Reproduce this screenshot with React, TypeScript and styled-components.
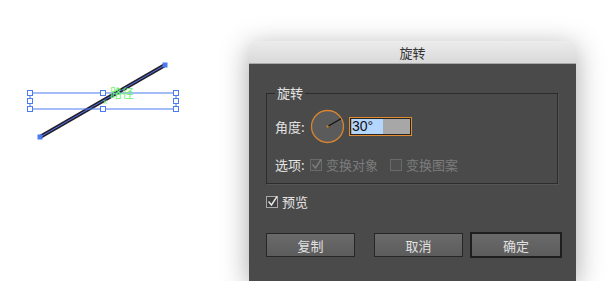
import styled, { createGlobalStyle } from "styled-components"

const GlobalStyle = createGlobalStyle`
    html, body {
        margin: 0;
        padding: 0;
        background: #ffffff;
    }
`

const cjk = `"Noto Sans CJK SC", "Noto Sans", sans-serif`

const Page = styled.div`
    display: flex;
    width: 609px;
    height: 281px;
    overflow: hidden;
    background: #ffffff;
`

const Canvas = styled.div`
    width: 249px;
    flex-shrink: 0;
`

const Dialog = styled.div`
    width: 327px;
    margin-top: 41px;
    display: flex;
    flex-direction: column;
    border-radius: 5px 5px 0 0;
    box-shadow: 0 6px 28px rgba(0, 0, 0, 0.35);
    font-family: ${cjk};
`

const TitleBar = styled.div`
    height: 22px;
    display: flex;
    align-items: center;
    justify-content: center;
    background: linear-gradient(#ececec, #d9d9d9);
    border-radius: 5px 5px 0 0;
    border-bottom: 1px solid #a9a9a9;
    font-size: 13px;
    color: #333;
`

const Body = styled.div`
    flex: 1;
    background: #4a4a4a;
    padding: 22px 17px 0 17px;
    display: flex;
    flex-direction: column;
`

const Group = styled.fieldset`
    margin: 0 1px 0 0;
    padding: 9px 8px 0 8px;
    height: 98px;
    box-sizing: border-box;
    border: 1px solid #2c2c2c;
    box-shadow: 1px 1px 0 #555;
    display: flex;
    flex-direction: column;
    gap: 11px;
`

const Legend = styled.legend`
    padding: 0 2px;
    margin-left: 0;
    font-size: 13px;
    line-height: 14px;
    color: #e4e4e4;
`

const Row = styled.div`
    display: flex;
    align-items: center;
`

const Label = styled.span`
    width: 35px;
    font-size: 13px;
    color: #e4e4e4;
`

const Dial = styled.svg`
    width: 35px;
    height: 35px;
    display: block;
`

const AngleInput = styled.div`
    margin-left: 4px;
    width: 63px;
    height: 19px;
    box-sizing: border-box;
    border: 1px solid #e38b2f;
    display: flex;
`

const AngleInner = styled.div`
    flex: 1;
    border: 1px solid #262626;
    background: #a7a7a7;
    display: flex;
    align-items: center;
    padding-left: 1px;
`

const Selected = styled.span`
    background: #b4d6fd;
    color: #111;
    font-family: "Liberation Sans", Arial, sans-serif;
    font-size: 14px;
    line-height: 15px;
    padding-right: 10px;
`

const Box = styled.span<{ $disabled?: boolean }>`
    width: 12px;
    height: 12px;
    box-sizing: border-box;
    border: 1px solid ${p => (p.$disabled ? "#6a6a6a" : "#a9a9a9")};
    background: ${p => (p.$disabled ? "#4f4f4f" : "#3f3f3f")};
    display: flex;
    align-items: center;
    justify-content: center;
    flex-shrink: 0;
`

const Check = styled.svg<{ $disabled?: boolean }>`
    width: 11px;
    height: 11px;
    overflow: visible;
    path {
        stroke: ${p => (p.$disabled ? "#7d7d7d" : "#e6e6e6")};
    }
`

const OptionText = styled.span<{ $disabled?: boolean }>`
    margin-left: 4px;
    font-size: 13px;
    color: ${p => (p.$disabled ? "#7c7c7c" : "#e4e4e4")};
`

const Option = styled.label<{ $gap?: number }>`
    display: flex;
    align-items: center;
    margin-left: ${p => p.$gap ?? 0}px;
`

const PreviewRow = styled.div`
    margin-top: 8px;
    display: flex;
    align-items: center;
`

const Buttons = styled.div`
    margin-top: 21px;
    display: flex;
    align-items: center;
`

const Button = styled.div<{ $primary?: boolean; $gap?: number }>`
    width: ${p => (p.$primary ? 92 : 89)}px;
    height: ${p => (p.$primary ? 26 : 24)}px;
    margin-left: ${p => p.$gap ?? 0}px;
    box-sizing: border-box;
    border: ${p => (p.$primary ? "2px solid #1f1f1f" : "1px solid #262626")};
    background: linear-gradient(#6a6a6a, #5c5c5c);
    display: flex;
    align-items: center;
    justify-content: center;
    font-size: 13px;
    color: #e0e0e0;
    flex-shrink: 0;
`

function CheckMark({ disabled }: { disabled?: boolean }) {
    return (
        <Check $disabled={disabled} viewBox="0 0 11 11">
            <path d="M1.5 5.5 L4.5 9 L10 0.5" fill="none" strokeWidth="1.4" />
        </Check>
    )
}

const handles: [number, number][] = [
    [30, 93], [103, 93], [176, 93],
    [30, 101], [176, 101],
    [30, 109], [103, 109], [176, 109],
]

function Drawing() {
    return (
        <svg width="249" height="281" viewBox="0 0 249 281">
            <line x1="40" y1="137" x2="165" y2="65" stroke="#261d26" strokeWidth="4" />
            <line x1="40" y1="137" x2="165" y2="65" stroke="#4a7bf0" strokeWidth="1" />
            <rect x="30" y="93" width="146" height="16" fill="none" stroke="#4a7bf0" strokeWidth="1" />
            {handles.map(([x, y]) => (
                <rect key={`${x}-${y}`} x={x - 2.5} y={y - 2.5} width="5" height="5" fill="#fff" stroke="#4a7bf0" strokeWidth="1" />
            ))}
            <rect x="37.5" y="134.5" width="5" height="5" fill="#4a7bf0" />
            <rect x="162.5" y="62.5" width="5" height="5" fill="#4a7bf0" />
            <text x="110" y="98" fontSize="12" fill="#6ef06e" fontFamily={cjk}>路径</text>
            <text x="103" y="104" fontSize="8" fill="#6ef06e" fontFamily="Liberation Sans, sans-serif">x</text>
        </svg>
    )
}

export default function App() {
    return (
        <>
            <GlobalStyle />
            <Page>
                <Canvas>
                    <Drawing />
                </Canvas>
                <Dialog>
                    <TitleBar>旋转</TitleBar>
                    <Body>
                        <Group>
                            <Legend>旋转</Legend>
                            <Row>
                                <Label>角度:</Label>
                                <Dial viewBox="0 0 35 35">
                                    <circle cx="17.5" cy="17.5" r="16" fill="#5b5b5b" stroke="#d9852f" strokeWidth="1.3" />
                                    <line x1="17.5" y1="17.5" x2="31" y2="9.7" stroke="#111" strokeWidth="1.2" />
                                    <circle cx="17.5" cy="17.5" r="1.2" fill="#c77a2c" />
                                </Dial>
                                <AngleInput>
                                    <AngleInner>
                                        <Selected>30°</Selected>
                                    </AngleInner>
                                </AngleInput>
                            </Row>
                            <Row>
                                <Label>选项:</Label>
                                <Option>
                                    <Box $disabled><CheckMark disabled /></Box>
                                    <OptionText $disabled>变换对象</OptionText>
                                </Option>
                                <Option $gap={12}>
                                    <Box $disabled />
                                    <OptionText $disabled>变换图案</OptionText>
                                </Option>
                            </Row>
                        </Group>
                        <PreviewRow>
                            <Option>
                                <Box><CheckMark /></Box>
                                <OptionText>预览</OptionText>
                            </Option>
                        </PreviewRow>
                        <Buttons>
                            <Button>复制</Button>
                            <Button $gap={19}>取消</Button>
                            <Button $primary $gap={7}>确定</Button>
                        </Buttons>
                    </Body>
                </Dialog>
            </Page>
        </>
    )
}
